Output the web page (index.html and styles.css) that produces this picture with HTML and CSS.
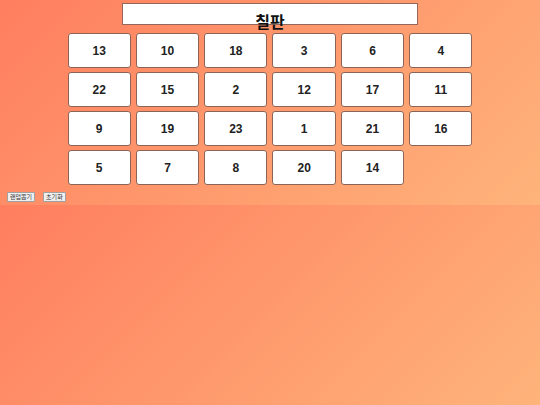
FILE: index.html
```
<!DOCTYPE html>
<html lang="ko">
<head>
    <meta charset="UTF-8">
    <meta name="viewport" content="width=device-width, initial-scale=1.0">
    <title>자리 배치</title>
    <link rel="stylesheet" href="styles.css">
</head>
<body>
    <div class="board">칠판</div>

    <div class="seats">
        <div class="seat">13</div>
        <div class="seat">10</div>
        <div class="seat">18</div>
        <div class="seat">3</div>
        <div class="seat">6</div>
        <div class="seat">4</div>
        <div class="seat">22</div>
        <div class="seat">15</div>
        <div class="seat">2</div>
        <div class="seat">12</div>
        <div class="seat">17</div>
        <div class="seat">11</div>
        <div class="seat">9</div>
        <div class="seat">19</div>
        <div class="seat">23</div>
        <div class="seat">1</div>
        <div class="seat">21</div>
        <div class="seat">16</div>
        <div class="seat">5</div>
        <div class="seat">7</div>
        <div class="seat">8</div>
        <div class="seat">20</div>
        <div class="seat">14</div>
    </div>

    <div class="controls">
        <button class="btn">랜덤뽑기</button>
        <button class="btn">초기화</button>
    </div>
</body>
</html>
```

FILE: styles.css
```
body {
    font-family: "Liberation Sans", Arial, "Noto Sans CJK KR", sans-serif;
    background: linear-gradient(135deg, #ff7e5f, #feb47b);
    margin: 0;
    padding: 3px 0 3px;
}

.board {
    width: 296px;
    height: 22px;
    box-sizing: border-box;
    margin: 0 auto;
    padding-top: 9px;
    background-color: #fff;
    border: 1px solid #94675a;
    text-align: center;
    font-family: "Noto Sans CJK KR", sans-serif;
    font-size: 16px;
    font-weight: bold;
    line-height: 16px;
    color: #111;
}

.seats {
    width: 405px;
    margin: 8px auto 0;
    display: grid;
    grid-template-columns: repeat(6, 1fr);
    gap: 4px 5px;
}

.seat {
    height: 35px;
    box-sizing: border-box;
    background-color: #fff;
    border: 1px solid #8c6456;
    border-radius: 3px;
    display: flex;
    align-items: center;
    justify-content: center;
    font-size: 12px;
    font-weight: bold;
    color: #222;
}

.controls {
    display: flex;
    gap: 8px;
    margin-top: 7px;
    padding-left: 7px;
}

.btn {
    font-family: "Noto Sans CJK KR", sans-serif;
    font-size: 6px;
    line-height: 6px;
    padding: 1px 2px;
    background-color: #efefef;
    border: 1px solid #a0a0a0;
    border-radius: 1px;
    color: #333;
}
```
